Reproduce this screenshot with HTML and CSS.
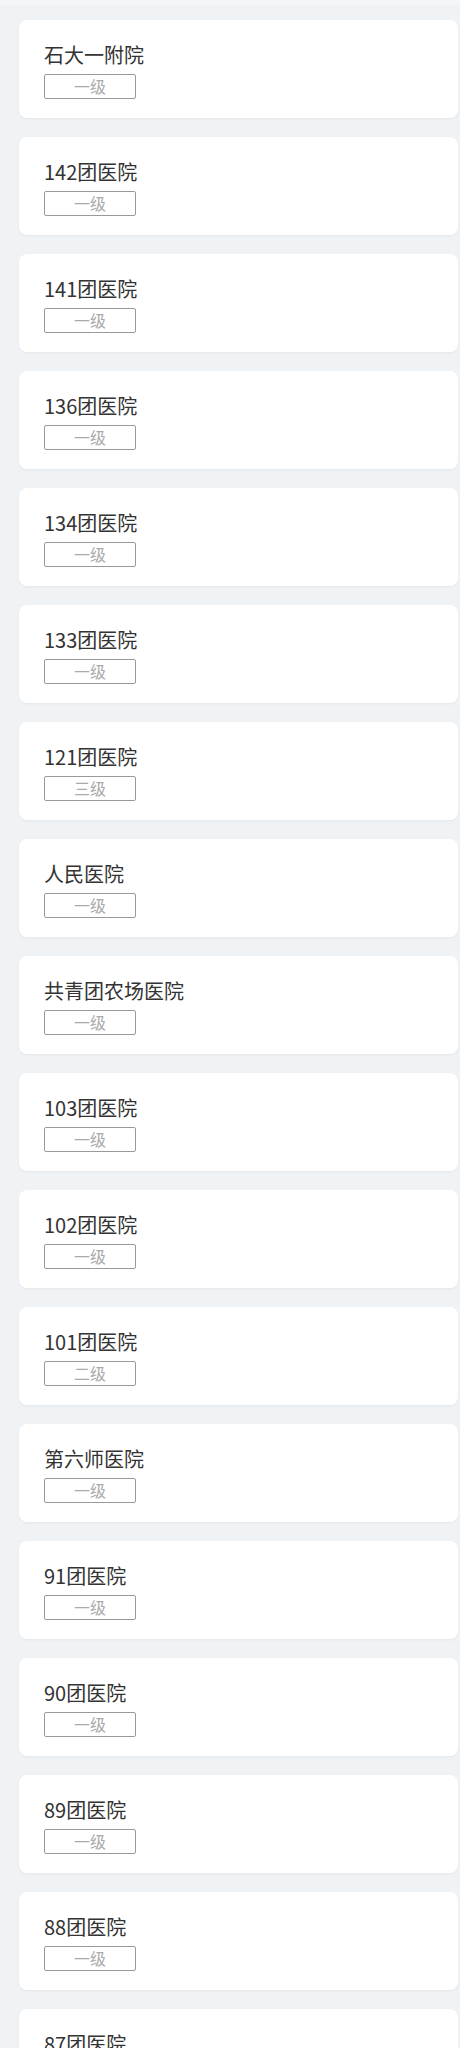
FILE: index.html
```html
<!DOCTYPE html>
<html lang="zh-CN">
<head>
<meta charset="utf-8">
<title>医院列表</title>
<link rel="stylesheet" href="styles.css">
</head>
<body>
<div class="topbar"></div>
<ul class="list">
  <li class="card"><div class="name">石大一附院</div><span class="tag">一级</span></li>
  <li class="card"><div class="name">142团医院</div><span class="tag">一级</span></li>
  <li class="card"><div class="name">141团医院</div><span class="tag">一级</span></li>
  <li class="card"><div class="name">136团医院</div><span class="tag">一级</span></li>
  <li class="card"><div class="name">134团医院</div><span class="tag">一级</span></li>
  <li class="card"><div class="name">133团医院</div><span class="tag">一级</span></li>
  <li class="card"><div class="name">121团医院</div><span class="tag">三级</span></li>
  <li class="card"><div class="name">人民医院</div><span class="tag">一级</span></li>
  <li class="card"><div class="name">共青团农场医院</div><span class="tag">一级</span></li>
  <li class="card"><div class="name">103团医院</div><span class="tag">一级</span></li>
  <li class="card"><div class="name">102团医院</div><span class="tag">一级</span></li>
  <li class="card"><div class="name">101团医院</div><span class="tag">二级</span></li>
  <li class="card"><div class="name">第六师医院</div><span class="tag">一级</span></li>
  <li class="card"><div class="name">91团医院</div><span class="tag">一级</span></li>
  <li class="card"><div class="name">90团医院</div><span class="tag">一级</span></li>
  <li class="card"><div class="name">89团医院</div><span class="tag">一级</span></li>
  <li class="card"><div class="name">88团医院</div><span class="tag">一级</span></li>
  <li class="card"><div class="name">87团医院</div><span class="tag">一级</span></li>
</ul>
</body>
</html>
```
FILE: styles.css
```css
html, body {
  margin: 0;
  padding: 0;
}
body {
  background: #eff3f6;
  font-family: "Noto Sans CJK SC", "Noto Sans", sans-serif;
  color: #333;
}
.topbar {
  height: 5px;
  background: #f4f6f8;
}
.list {
  list-style: none;
  margin: 0;
  padding: 15px 2px 0 19px;
  display: flex;
  flex-direction: column;
  gap: 19px;
}
.card {
  background: #fff;
  border-radius: 8px;
  box-shadow: 0 1px 3px rgba(0, 0, 0, 0.05);
  height: 98px;
  box-sizing: border-box;
  padding: 21px 25px 0 25px;
  display: flex;
  flex-direction: column;
  align-items: flex-start;
}
.name {
  font-size: 20px;
  line-height: 28px;
  color: #333;
}
.tag {
  margin-top: 5px;
  width: 92px;
  height: 25px;
  box-sizing: border-box;
  border: 1px solid #999;
  border-radius: 2px;
  font-size: 16px;
  line-height: 23px;
  text-align: center;
  color: #aaa;
}
```
